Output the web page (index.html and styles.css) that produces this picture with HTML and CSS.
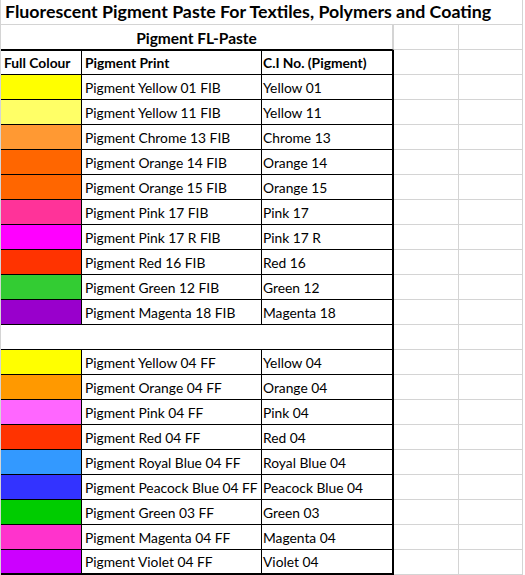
FILE: index.html
```html
<!DOCTYPE html>
<html>
<head>
<meta charset="utf-8">
<link rel="stylesheet" href="styles.css">
</head>
<body>
<div class="sheet">
  <div class="row title-row">
    <div class="cell title">Fluorescent Pigment Paste For Textiles, Polymers and Coating</div>
  </div>
  <div class="row">
    <div class="cell sub">Pigment FL-Paste</div>
    <div class="cell grid-d"></div>
    <div class="cell grid-e"></div>
  </div>
  <div class="row head">
    <div class="cell a">Full Colour</div>
    <div class="cell b">Pigment Print</div>
    <div class="cell c">C.I No. (Pigment)</div>
    <div class="cell grid-d"></div>
    <div class="cell grid-e"></div>
  </div>

  <div class="row"><div class="cell a sw-y01"></div><div class="cell b">Pigment Yellow 01 FIB</div><div class="cell c">Yellow 01</div><div class="cell grid-d"></div><div class="cell grid-e"></div></div>
  <div class="row"><div class="cell a sw-y11"></div><div class="cell b">Pigment Yellow 11 FIB</div><div class="cell c">Yellow 11</div><div class="cell grid-d"></div><div class="cell grid-e"></div></div>
  <div class="row"><div class="cell a sw-ch13"></div><div class="cell b">Pigment Chrome 13 FIB</div><div class="cell c">Chrome 13</div><div class="cell grid-d"></div><div class="cell grid-e"></div></div>
  <div class="row"><div class="cell a sw-or14"></div><div class="cell b">Pigment Orange 14 FIB</div><div class="cell c">Orange 14</div><div class="cell grid-d"></div><div class="cell grid-e"></div></div>
  <div class="row"><div class="cell a sw-or15"></div><div class="cell b">Pigment Orange 15 FIB</div><div class="cell c">Orange 15</div><div class="cell grid-d"></div><div class="cell grid-e"></div></div>
  <div class="row"><div class="cell a sw-pk17"></div><div class="cell b">Pigment Pink 17 FIB</div><div class="cell c">Pink 17</div><div class="cell grid-d"></div><div class="cell grid-e"></div></div>
  <div class="row"><div class="cell a sw-pk17r"></div><div class="cell b">Pigment Pink 17 R FIB</div><div class="cell c">Pink 17 R</div><div class="cell grid-d"></div><div class="cell grid-e"></div></div>
  <div class="row"><div class="cell a sw-rd16"></div><div class="cell b">Pigment Red 16 FIB</div><div class="cell c">Red 16</div><div class="cell grid-d"></div><div class="cell grid-e"></div></div>
  <div class="row"><div class="cell a sw-gr12"></div><div class="cell b">Pigment Green 12 FIB</div><div class="cell c">Green 12</div><div class="cell grid-d"></div><div class="cell grid-e"></div></div>
  <div class="row"><div class="cell a sw-mg18"></div><div class="cell b">Pigment Magenta 18 FIB</div><div class="cell c">Magenta 18</div><div class="cell grid-d"></div><div class="cell grid-e"></div></div>

  <div class="row"><div class="cell blank"></div><div class="cell grid-d"></div><div class="cell grid-e"></div></div>

  <div class="row"><div class="cell a sw-y04"></div><div class="cell b">Pigment Yellow 04 FF</div><div class="cell c">Yellow 04</div><div class="cell grid-d"></div><div class="cell grid-e"></div></div>
  <div class="row"><div class="cell a sw-or04"></div><div class="cell b">Pigment Orange 04 FF</div><div class="cell c">Orange 04</div><div class="cell grid-d"></div><div class="cell grid-e"></div></div>
  <div class="row"><div class="cell a sw-pk04"></div><div class="cell b">Pigment Pink 04 FF</div><div class="cell c">Pink 04</div><div class="cell grid-d"></div><div class="cell grid-e"></div></div>
  <div class="row"><div class="cell a sw-rd04"></div><div class="cell b">Pigment Red 04 FF</div><div class="cell c">Red 04</div><div class="cell grid-d"></div><div class="cell grid-e"></div></div>
  <div class="row"><div class="cell a sw-rb04"></div><div class="cell b">Pigment Royal Blue 04 FF</div><div class="cell c">Royal Blue 04</div><div class="cell grid-d"></div><div class="cell grid-e"></div></div>
  <div class="row"><div class="cell a sw-pb04"></div><div class="cell b">Pigment Peacock Blue 04 FF</div><div class="cell c">Peacock Blue 04</div><div class="cell grid-d"></div><div class="cell grid-e"></div></div>
  <div class="row"><div class="cell a sw-gr03"></div><div class="cell b">Pigment Green 03 FF</div><div class="cell c">Green 03</div><div class="cell grid-d"></div><div class="cell grid-e"></div></div>
  <div class="row"><div class="cell a sw-mg04"></div><div class="cell b">Pigment Magenta 04 FF</div><div class="cell c">Magenta 04</div><div class="cell grid-d"></div><div class="cell grid-e"></div></div>
  <div class="row last"><div class="cell a sw-vi04"></div><div class="cell b">Pigment Violet 04 FF</div><div class="cell c">Violet 04</div><div class="cell grid-d"></div><div class="cell grid-e"></div></div>
</div>
</body>
</html>
```

FILE: styles.css
```css
* { box-sizing: border-box; }

html, body {
  margin: 0;
  padding: 0;
  background: #ffffff;
}

.sheet {
  width: 525px;
  height: 575px;
  border-left: 1px solid #d4d4d4;
  font-family: Lato, "Liberation Sans", sans-serif;
  font-size: 13.8px;
  color: #000000;
  overflow: hidden;
}

.row {
  display: grid;
  grid-template-columns: 81px 180px 132px 65px 64px;
  height: 25px;
}

.cell {
  height: 25px;
  border-right: 1px solid #000;
  border-bottom: 1px solid #000;
  padding: 0 3px;
  display: flex;
  align-items: flex-end;
  padding-bottom: 3px;
  white-space: nowrap;
  overflow: visible;
}

.cell.b { padding-left: 3px; }
.cell.c { border-right: 2px solid #000; padding-left: 1px; }

.grid-d, .grid-e {
  border-right: 1px solid #d4d4d4;
  border-bottom: 1px solid #d4d4d4;
}

.title-row .title {
  grid-column: 1 / 6;
  border-right: 1px solid #d4d4d4;
  border-bottom: 1px solid #d4d4d4;
  font-weight: 700;
  font-size: 17.8px;
  padding-left: 4px;
  padding-bottom: 2px;
}

.sub {
  grid-column: 1 / 4;
  justify-content: center;
  font-weight: 700;
  font-size: 15.5px;
  padding-bottom: 2px;
  border-right: 2px solid #d4d4d4;
  border-bottom: 1px solid #000;
}

.head .a, .head .b, .head .c {
  font-weight: 700;
  border-top: 1px solid #000;
}

.head .a { padding-left: 3px; }

.blank {
  grid-column: 1 / 4;
  border-right: 2px solid #000;
}

.last .a, .last .b, .last .c { border-bottom: 2px solid #000; }

.sw-y01 { background: #ffff00; }
.sw-y11 { background: #ffff66; }
.sw-ch13 { background: #ff9933; }
.sw-or14 { background: #ff6600; }
.sw-or15 { background: #ff6600; }
.sw-pk17 { background: #ff3399; }
.sw-pk17r { background: #ff00ff; }
.sw-rd16 { background: #ff3300; }
.sw-gr12 { background: #33cc33; }
.sw-mg18 { background: #9900cc; }
.sw-y04 { background: #ffff00; }
.sw-or04 { background: #ff9900; }
.sw-pk04 { background: #ff66ff; }
.sw-rd04 { background: #ff3300; }
.sw-rb04 { background: #3399ff; }
.sw-pb04 { background: #3333ff; }
.sw-gr03 { background: #00cc00; }
.sw-mg04 { background: #ff33cc; }
.sw-vi04 { background: #cc00ff; }
```
